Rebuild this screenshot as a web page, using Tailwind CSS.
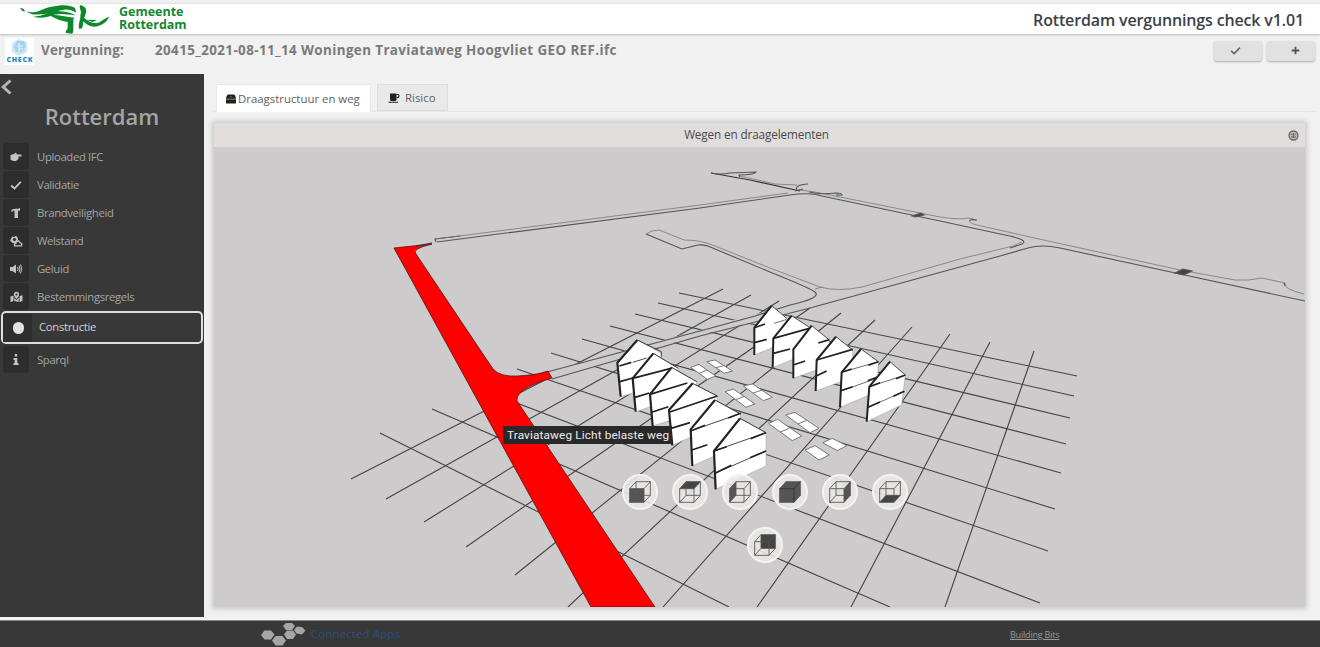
<!DOCTYPE html>
<html lang="nl">
<head>
<meta charset="utf-8">
<title>Rotterdam vergunnings check</title>
<script src="https://cdn.jsdelivr.net/npm/@tailwindcss/browser@4"></script>
</head>
<body class="w-[1320px] h-[647px] overflow-hidden bg-[#f1f1f1] flex flex-col font-['Open_Sans','Noto_Sans',sans-serif]">
<svg class="hidden">
  <defs>
    <symbol id="cube" viewBox="0 0 66 66"><path d="M2 23H45V64H2ZM21 2H64V43H21ZM2 23L21 2M45 23L64 2M2 64L21 43M45 64L64 43" fill="none" stroke="#555" stroke-width="2.6"/></symbol>
    <symbol id="check" viewBox="0 0 12 12"><path d="M1.2 6.5L4.5 9.5L10.8 2.8" fill="none" stroke="currentColor" stroke-width="1.8"/></symbol>
  </defs>
</svg>

<header class="h-[31px] shrink-0 mt-[3px] mb-[1px] border-t border-[#e6e6e6] bg-white shadow-[0_1px_2px_#bbb] flex items-start justify-between pr-[16px] z-10">
  <div class="flex">
    <svg class="w-[90px] h-[30px] ml-5" viewBox="60 12 270 90" fill="#0b8a2c">
      <path d="M60 23L70 26L76 35L66 32Z"/>
      <path d="M77 32C105 47 125 24 155 20C180 15 208 12 225 24L229 38C206 24 190 28 174 34C190 34 216 38 226 46C202 44 185 40 163 44C144 51 124 57 99 50C122 49 135 43 148 36C128 40 100 53 77 32Z"/>
      <path d="M100 36C130 42 150 26 190 21L215 23C180 26 160 32 148 38C130 44 115 46 100 36ZM148 46C165 42 194 50 224 53L211 67C187 65 168 57 148 46Z"/>
      <path d="M240 15C268 23 258 38 253 54C267 68 280 70 296 68C309 60 317 53 327 50C321 66 306 76 284 80C267 80 256 70 250 64C248 75 251 87 238 87C232 75 243 59 241 45C247 34 236 25 240 15Z"/>
      <path d="M203 60L221 59C218 75 223 91 217 101L198 99C195 90 203 91 203 83Z"/>
      <path d="M259 59L291 60L278 66Z"/>
    </svg>
    <div class="ml-[9px] mt-[1px] text-[12.5px] leading-[13px] font-bold text-[#15852f]">Gemeente<br>Rotterdam</div>
  </div>
  <h1 class="mt-[5px] text-[16px] leading-[22px] font-semibold text-[#3c4146] text-right whitespace-nowrap tracking-[-0.15px]">Rotterdam vergunnings check v1.01</h1>
</header>

<div class="h-[39px] shrink-0 flex items-start pl-[5px] pr-[5px] text-[#7a7a7a] font-bold text-[13.4px] leading-[18px]">
  <svg class="w-[29px] h-[27px] mt-[3px]" viewBox="0 0 29 27"><rect width="29" height="27" fill="#fff"/><path d="M7 5L14 1L22 4V14L14 18L7 14Z" fill="#cfe7f5"/><path d="M12 3H19L21 8L17 14H11L9 9Z" fill="#a5d2ed"/><path d="M12 8H18M13 11H18M14 5V14" stroke="#e8f5fb"/><text x="1.5" y="24.2" font-family="Open Sans" font-size="7" font-weight="800" fill="#168ac6" textLength="26">CHECK</text></svg>
  <div class="w-[114px] pl-[7px] mt-[6px] tracking-[0.2px]">Vergunning:</div>
  <div class="mt-[6px] ml-[7px] tracking-[0.4px] grow">20415_2021-08-11_14 Woningen Traviataweg Hoogvliet GEO REF.ifc</div>
  <div class="flex gap-[5px] mt-[6px] text-[#666]">
    <div class="w-[48px] h-5 rounded-[3px] bg-[#e1e1e1] shadow-[0_1px_2px_#aaa] flex justify-center pt-[4px] pr-[6px]"><svg class="w-[11px] h-[11px]"><use href="#check"/></svg></div>
    <div class="w-[48px] h-5 rounded-[3px] bg-[#e1e1e1] shadow-[0_1px_2px_#aaa] flex justify-center pt-[5px] pl-[8px]"><svg class="w-[9px] h-[9px]" viewBox="0 0 10 10"><path d="M5 .8V9.2M.8 5H9.2" stroke="#555" stroke-width="2"/></svg></div>
  </div>
</div>

<main class="h-[543px] shrink-0 flex">
  <aside class="w-[204px] bg-[#383838] text-[#a5a5a5] text-[11.3px]">
    <svg class="w-[14px] h-[16px] mt-[5px] block" viewBox="0 0 14 16"><path d="M10.5 1.5L3.2 8L10.5 14.5" fill="none" stroke="#b5b5b5" stroke-width="3"/></svg>
    <h2 class="h-[48px] pt-[5px] text-center text-[22px] leading-[32px] font-semibold text-[#a5a5a5]">Rotterdam</h2>
    <nav class="pl-[3px] flex flex-col gap-[1px] leading-[27px] tracking-[-0.35px]">
      <div class="flex h-[27px]"><span class="w-[26px] h-[27px] bg-[#2d2d2d] rounded-sm grid place-items-center"><svg class="w-3 h-3" viewBox="0 0 12 12" fill="#c2c2c2"><path d="M.5 4L4 3L6 1.5L7 3.5H11.5V5.5H8.5V8L6 10H3L.5 8.5Z"/></svg></span><span class="ml-2">Uploaded IFC</span></div>
      <div class="flex h-[27px]"><span class="w-[26px] h-[27px] bg-[#2d2d2d] rounded-sm grid place-items-center text-[#c8c8c8]"><svg class="w-3 h-3"><use href="#check"/></svg></span><span class="ml-2">Validatie</span></div>
      <div class="flex h-[27px]"><span class="w-[26px] h-[27px] bg-[#2d2d2d] rounded-sm grid place-items-center"><svg class="w-3 h-3" viewBox="0 0 12 12" fill="#c2c2c2"><path d="M4 4C4 2 6 1 7 2L10 1V4L8 3.5V11H4.5V4L3 3.5L2 5L1 4L2.5 2H5Z"/></svg></span><span class="ml-2">Brandveiligheid</span></div>
      <div class="flex h-[27px]"><span class="w-[26px] h-[27px] bg-[#2d2d2d] rounded-sm grid place-items-center"><svg class="w-[14px] h-3" viewBox="0 0 14 12"><path d="M7.5 8H3.5L1 5.5L2.5 3L3 1.5L5 2L7 .8L8.5 2.5L9 4.5" fill="#c2c2c2"/><circle cx="5.5" cy="4.5" r="1.6" fill="#2d2d2d"/><path d="M5.5 10.8H12.5L12.8 8.7L11 7.5L9.5 5.8L7 6.8L7 8.3L5.5 9Z" fill="#2d2d2d" stroke="#c2c2c2" stroke-width="1.3"/></svg></span><span class="ml-2">Welstand</span></div>
      <div class="flex h-[27px]"><span class="w-[26px] h-[27px] bg-[#2d2d2d] rounded-sm grid place-items-center"><svg class="w-[14px] h-3" viewBox="0 0 14 12"><path d="M1 4H3.5L7 1.5V10.5L3.5 8H1Z" fill="#c2c2c2"/><path d="M8.5 4Q9.8 6 8.5 8M10 2.5Q12 6 10 9.5M11.5 1.5Q14 6 11.5 10.5" fill="none" stroke="#c2c2c2"/></svg></span><span class="ml-2">Geluid</span></div>
      <div class="flex h-[27px]"><span class="w-[26px] h-[27px] bg-[#2d2d2d] rounded-sm grid place-items-center"><svg class="w-[13px] h-3" viewBox="0 0 13 12" fill="#c2c2c2"><path d="M.5 5.5L3.5 4.5V10L.5 11.2ZM4.3 6.5L6.5 9L8.7 6.5V11L4.3 10ZM9.5 5.2L12.5 4V10L9.5 11ZM6.5 8C2.5 4 3.8 .8 6.5 .8S10.5 4 6.5 8Z"/><circle cx="6.5" cy="3.5" r="1" fill="#2d2d2d"/></svg></span><span class="ml-2">Bestemmingsregels</span></div>
    </nav>
    <div class="ml-[1px] mt-[1px] w-[202px] h-[33px] border-2 border-[#dedede] rounded-[5px] flex items-center text-[#d0d0d0] tracking-[-0.3px]"><span class="w-[29px] h-[28px] bg-[#2d2d2d] flex items-center pl-[10px]"><span class="w-[11px] h-[12px] rounded-full bg-[#e2e2e2]"></span></span><span class="ml-[7px]">Constructie</span></div>
    <div class="pl-[3px] mt-[2px] flex h-[27px] leading-[27px]"><span class="w-[26px] h-[27px] bg-[#2d2d2d] rounded-sm grid place-items-center"><svg class="w-[6px] h-[11px]" viewBox="0 0 6 11" fill="#c2c2c2"><path d="M1.8 0H4.2V2.5H1.8ZM.5 4H4.3V9H5.5V11H.5V9H1.7V6H.5Z"/></svg></span><span class="ml-2 tracking-[-0.35px]">Sparql</span></div>
  </aside>

  <section class="w-[1116px] pl-[9px]">
    <div class="h-[38px] pt-[10px] pl-[3px] flex gap-[6px] w-[1103px] border-b border-[#e6e6e6] text-[11.4px] leading-[28px] text-[#606060]">
      <div class="w-[155px] h-[28px] bg-white border border-b-0 border-[#e8e8e8] flex items-center pl-[9px]"><svg class="w-[10px] h-[10px]" viewBox="0 0 10 10"><path d="M2 .5H8Q9.5 1 10 5V9.5H0V5Q.5 1 2 .5Z" fill="#222"/><path d="M0 5.2H10M5 2V3.5" stroke="#999" stroke-width=".8"/></svg><span class="ml-[2px] whitespace-nowrap">Draagstructuur en weg</span></div>
      <div class="w-[71px] h-[27px] bg-[#e9e9e9] border border-[#dedede] flex items-center pl-[10px]"><svg class="w-3 h-[10px]" viewBox="0 0 12 10"><path d="M2 .5H8.5V7Q8 8 7 8H3.5Q2 8 2 7ZM.5 8.7H10V9.7H.5Z" fill="#222"/><path d="M8.5 1.5H10Q11 1.5 11 3T8.5 5" fill="none" stroke="#222" stroke-width="1.2"/></svg><span class="ml-[5px] mt-[1px]">Risico</span></div>
    </div>
    <div class="mt-[11px] ml-[1px] w-[1091px] h-[484px] relative bg-[#cdcbcc] shadow-[0_0_5px_2px_#c8c7c8]">
      <div class="h-[24px] bg-[#e1dddd] flex items-center text-[11.7px] text-[#4a4a4a] tracking-[-0.1px] pr-[6px]"><span class="grow text-center pl-[11px]">Wegen en draagelementen</span><svg class="w-[11px] h-[11px]" viewBox="0 0 11 11"><circle cx="5.5" cy="5.5" r="4.5" fill="#bbb" stroke="#666" stroke-width="1.3"/><path d="M3 5Q3 3 4.5 4.7M6.5 4.7Q8 3 8 5M5.5 3V8M3 7H8" fill="none" stroke="#666" stroke-width="1"/></svg></div>
      <svg class="w-[1091px] h-[460px] block" viewBox="214 147 1091 460">
        <g stroke="#444" stroke-width="1.1" fill="none">
          <path d="M679 293L1077 376M658 303L1074 396M635 314L1070 418M610 326L1066 444M582 339L1061 473M551 353L1055 509M517 369L1048 551M480 389L1040 603M432 409L890 607M380 433L729 607"/>
          <path d="M351 479L723 289M386 499L751 295M424 522L779 301M466 547L810 308M515 575L841 313M568 607L875 320M663 607L912 327M757 607L950 334M851 607L990 342M945 607L1034 351"/>
        </g>
        <path d="M547 372L700 330L755 314L790 307Q821 303 816 295L816 303L805 309L700 335L552 379Z" fill="#cdcbcc"/>
        <g fill="none" stroke="#555" stroke-width="1.1">
          <path d="M552 379L700 336L810 308L1000 256L1028 248Q1042 244 1060 248L1180 274L1305 301"/>
          <path d="M547 372L700 331L755 316L790 305Q822 298 815 292Q812 289 770 272L715 249Q705 244 698 245L682 249L646 234"/>
          <path d="M437 242L700 208L790 195Q810 192 822 196L940 221L1005 235Q1030 240 1022 244L1010 248"/>
          <path d="M711 173L750 180L800 191" stroke="#333"/>
          <path d="M436 242L435 239L460 236M711 173Q720 175 730 173L756 172Q754 175 739 175L740 177"/>
          <g stroke="#777" stroke-width=".8">
            <path d="M436 239L700 205L788 193M646 234L652 231L659 230L684 240Q702 240 715 246L770 268L820 287Q838 292 862 287L960 259L1013 246L1022 242"/>
            <path d="M740 176L775 184L797 185M800 190L815 192L940 217Q960 220 968 218Q974 218 976 221M970 220Q968 223 977 225L1030 237L1180 270L1235 280Q1249 281 1262 278L1285 283Q1283 289 1304 294M815 289L822 287"/>
          </g>
          <path d="M797 190Q794 185 808 184M809 192Q820 195 836 193Q842 193 842 195L836 195M795 191L803 189M970 221Q969 219 977 220M1284 283L1285 286"/>
          <path d="M912 216L921 213L924 215L915 217ZM1175 273L1183 269L1192 271L1184 275Z" fill="#444"/>
        </g>

        <path d="M394 248L432 244Q411 249 416 254L493 369Q500 377 518 376Q537 375 548 371L552 378Q515 389 517 401L655 607H591Z" fill="#f00" stroke="#5a1010" stroke-width=".8"/>
        <path d="M416 246L432 243" stroke="#333" stroke-width="1"/>

        <g transform="translate(600 290) scale(.33333)" stroke-linejoin="round">
          <g fill="#fff" stroke="#777" stroke-width="3">
            <path d="M272 232L297 223L347 258L322 268ZM320 215L345 210L397 243L373 250ZM375 305L400 297L465 342L438 352ZM430 288L458 282L517 322L490 332ZM505 400L533 388L605 438L577 452ZM557 375L585 367L657 415L630 428ZM615 480L645 467L688 495L657 510ZM668 458L697 445L740 467L712 482Z"/>
            <path d="M297 250L322 240M348 233L370 227M407 329L433 319M460 309L487 300M541 426L568 415M593 402L620 391"/>
          </g>
          <g fill="#fff" stroke="#999" stroke-width="1.5">
            <path d="M515 47L463 113V195L520 172L560 155V85Z"/>
            <path d="M575 77L520 145L518 233L590 203L628 175V112Z"/>
            <path d="M635 107L580 178V265L655 238L688 220V150Z"/>
            <path d="M708 140L650 210L647 303L728 273L758 250V180Z"/>
            <path d="M783 177L725 247L720 352L810 314L832 290L835 215Z"/>
            <path d="M870 215L808 290L800 395L905 345L916 255Z"/>
          </g>
          <g fill="none" stroke="#222" stroke-width="6">
            <path d="M515 47L463 113V195M575 77L520 145L518 233M635 107L580 178V265M708 140L650 210L647 303M783 177L725 247L720 352M870 215L808 290L800 395"/>
            <path d="M463 113L495 102M463 158L500 148M520 145L628 115M520 190L570 177M580 225L615 213M650 210L758 178M650 257L680 243M725 247L755 237M805 226L835 215M722 302L758 290M803 272L831 262M808 290L840 278M888 266L916 255M804 352L840 336M880 319L913 304M655 159L688 149" stroke-width="5"/>
            <path d="M515 47L560 85M575 77L628 112M635 107L688 150M708 140L758 180M783 177L835 215M870 215L916 255M522 100L558 89M726 302L830 265M808 290L916 255M804 352L913 304M725 247L835 215" stroke-width="2"/>
          </g>
          <g fill="#fff" stroke="#999" stroke-width="1.5">
            <path d="M112 150L52 218L62 320L180 285L184 190Z"/>
            <path d="M160 190L98 265L107 365L160 347L230 300L235 235Z"/>
            <path d="M215 232L150 313L158 408L215 390L288 350L290 275Z"/>
            <path d="M278 280L207 360L217 466L275 440L350 400L352 318Z"/>
            <path d="M345 330L272 418L277 528L345 497L420 450L422 372Z"/>
            <path d="M420 385L342 483L347 598L498 528V428Z"/>
          </g>
          <g fill="none" stroke="#222">
            <path d="M112 150L52 218L62 320M160 190L98 265L107 365M215 232L150 313L158 408M278 280L207 360L217 466M345 330L272 418L277 528M420 385L342 483L347 598" stroke-width="6.5"/>
            <path d="M58 228L94 217M60 275L98 264M98 265L210 236M105 322L148 309M150 313L262 279M155 367L205 350M207 367L352 318M213 415L270 398M272 423L315 406M385 384L422 370M276 480L322 464M342 483L380 470M452 446L498 428M345 550L394 526M450 503L498 483" stroke-width="5"/>
            <path d="M112 150L184 185V200M160 190L235 235M215 232L290 275M278 280L352 318M345 330L422 372M420 385L498 428M342 483L498 428M345 550L498 483M272 423L422 370M98 217L140 204" stroke-width="2.5"/>
          </g>
        </g>
      </svg>
      <div class="absolute left-[289px] top-[303px] w-[169px] h-[18px] bg-[#292929] text-[#ececec] font-[Roboto,sans-serif] text-[11.8px] tracking-[0.13px] leading-[18px] pl-[4px] whitespace-nowrap">Traviataweg Licht belaste weg</div>
      <div class="absolute left-[408px] top-[351px] w-[286px] flex flex-wrap justify-center gap-x-[14px] gap-y-[17px]">
        <div class="size-9 rounded-full bg-[#e9e8e6]/90 border-2 border-[#f4f3f1] grid place-items-center"><svg class="size-[22px]" viewBox="0 0 66 66"><path d="M2 23H45V64H2Z" fill="#555"/><use href="#cube"/></svg></div>
        <div class="size-9 rounded-full bg-[#e9e8e6]/90 border-2 border-[#f4f3f1] grid place-items-center"><svg class="size-[22px]" viewBox="0 0 66 66"><path d="M2 23L21 2H64L45 23Z" fill="#444"/><use href="#cube"/></svg></div>
        <div class="size-9 rounded-full bg-[#e9e8e6]/90 border-2 border-[#f4f3f1] grid place-items-center"><svg class="size-[22px]" viewBox="0 0 66 66"><path d="M2 23L21 2V43L2 64Z" fill="#555"/><use href="#cube"/></svg></div>
        <div class="size-9 rounded-full bg-[#e9e8e6]/90 border-2 border-[#f4f3f1] grid place-items-center"><svg class="size-[22px]" viewBox="0 0 66 66"><path d="M2 23L21 2H64V43L45 64H2Z" fill="#555"/><use href="#cube"/><path d="M2 23H45V64M45 23L64 2" fill="none" stroke="#333" stroke-width="2.6"/></svg></div>
        <div class="size-9 rounded-full bg-[#e9e8e6]/90 border-2 border-[#f4f3f1] grid place-items-center"><svg class="size-[22px]" viewBox="0 0 66 66"><path d="M45 23L64 2V43L45 64Z" fill="#555"/><use href="#cube"/></svg></div>
        <div class="size-9 rounded-full bg-[#e9e8e6]/90 border-2 border-[#f4f3f1] grid place-items-center"><svg class="size-[22px]" viewBox="0 0 66 66"><path d="M2 64L21 43H64L45 64Z" fill="#444"/><use href="#cube"/></svg></div>
        <div class="size-9 rounded-full bg-[#e9e8e6]/90 border-2 border-[#f4f3f1] grid place-items-center"><svg class="size-[22px]" viewBox="0 0 66 66"><path d="M21 2H64V43H21Z" fill="#444"/><use href="#cube"/></svg></div>
      </div>
    </div>
  </section>
</main>

<footer class="grow mt-[3px] border-t border-[#888] bg-[#383838] flex items-start">
  <svg class="w-[46px] h-[24px] ml-[261px] mt-[1px]" viewBox="0 0 46 24" fill="#a6a6a6"><path d="M0 13L3.5 8.5H10L13.5 12.5L10 17.5H3.5ZM11 18.5L14.5 14H21.5L25 18.5L21.5 23.5H14.5ZM23 12.5L26 8.5H32L35 12.5L32 17H26ZM22 4L25 1H31L34 4L31 8H25ZM33 8L36 4.5L41 5L44.5 8.5L41 12.5L35.5 11.5Z"/></svg>
  <span class="ml-[4px] mt-[4px] text-[11.5px] leading-[18px] text-[#25507f] tracking-[0.1px] w-[699px]">Connected Apps</span>
  <span class="mt-[6px] text-[9px] leading-[16px] underline text-[#999] tracking-[-0.2px]">Building Bits</span>
</footer>
</body>
</html>
